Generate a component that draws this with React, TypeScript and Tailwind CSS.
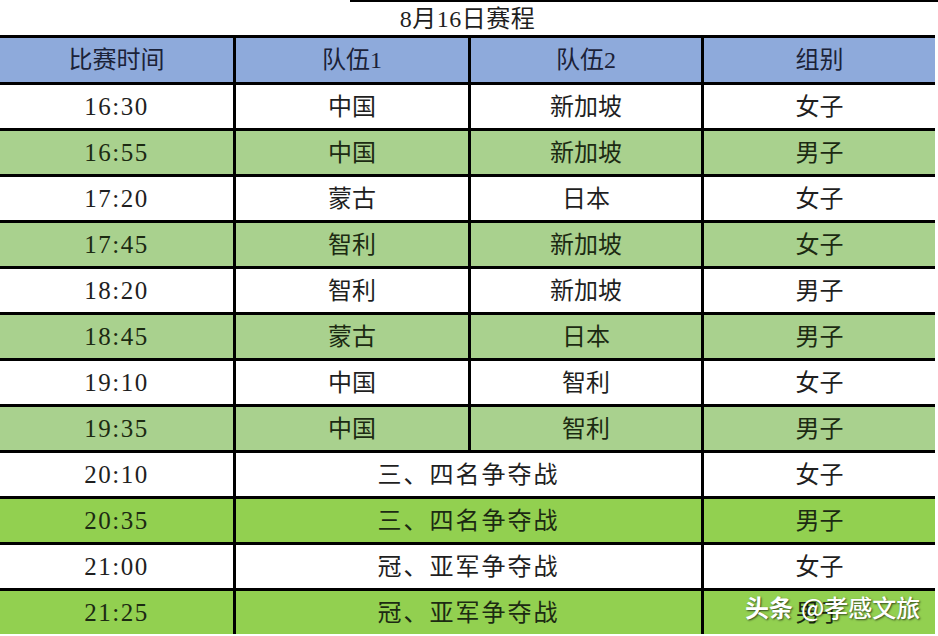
import React from "react"

type Row = {
  time: string
  team1: string
  team2?: string
  group: string
  tone: "white" | "light" | "bright"
}

const rows: Row[] = [
  { time: "16:30", team1: "中国", team2: "新加坡", group: "女子", tone: "white" },
  { time: "16:55", team1: "中国", team2: "新加坡", group: "男子", tone: "light" },
  { time: "17:20", team1: "蒙古", team2: "日本", group: "女子", tone: "white" },
  { time: "17:45", team1: "智利", team2: "新加坡", group: "女子", tone: "light" },
  { time: "18:20", team1: "智利", team2: "新加坡", group: "男子", tone: "white" },
  { time: "18:45", team1: "蒙古", team2: "日本", group: "男子", tone: "light" },
  { time: "19:10", team1: "中国", team2: "智利", group: "女子", tone: "white" },
  { time: "19:35", team1: "中国", team2: "智利", group: "男子", tone: "light" },
  { time: "20:10", team1: "三、四名争夺战", group: "女子", tone: "white" },
  { time: "20:35", team1: "三、四名争夺战", group: "男子", tone: "bright" },
  { time: "21:00", team1: "冠、亚军争夺战", group: "女子", tone: "white" },
  { time: "21:25", team1: "冠、亚军争夺战", group: "男子", tone: "bright" },
]

const toneClass = {
  white: "bg-white text-[#1f1f1f]",
  light: "bg-[#a9d18e] text-[#1c2a12]",
  bright: "bg-[#92d050] text-[#1c2a12]",
}

const cell = "flex items-center justify-center h-[43px]"

export default function App() {
  return (
    <div
      className="relative w-[938px] h-[636px] overflow-hidden bg-white"
      style={{ fontFamily: '"Liberation Serif", "Noto Sans CJK SC", serif' }}
    >
      {/* partial top rule */}
      <div className="flex h-[2px]">
        <div className="w-[350px] bg-white" />
        <div className="flex-1 bg-black" />
      </div>

      <div className="grid w-[935px] grid-cols-[233px_232px_230px_231px] gap-[3px] bg-black text-[24px]">
        <div className="col-span-4 flex h-[33px] items-center justify-center bg-white text-[#1f1f1f] tracking-[0.5px]">
          8月16日赛程
        </div>

        {["比赛时间", "队伍1", "队伍2", "组别"].map((h) => (
          <div key={h} className="flex h-[44px] items-center justify-center bg-[#8eaadb] text-[#1b2238]">
            {h}
          </div>
        ))}

        {rows.map((r) => (
          <React.Fragment key={r.time}>
            <div className={`${cell} ${toneClass[r.tone]} text-[25px] tracking-[1.5px]`}>{r.time}</div>
            {r.team2 ? (
              <>
                <div className={`${cell} ${toneClass[r.tone]}`}>{r.team1}</div>
                <div className={`${cell} ${toneClass[r.tone]}`}>{r.team2}</div>
              </>
            ) : (
              <div className={`${cell} col-span-2 ${toneClass[r.tone]} tracking-[2px]`}>{r.team1}</div>
            )}
            <div className={`${cell} ${toneClass[r.tone]}`}>{r.group}</div>
          </React.Fragment>
        ))}
      </div>

      {/* watermark */}
      <div
        className="absolute left-[745px] top-[589px] flex items-center gap-[8px] text-[24px] font-bold text-white"
        style={{
          fontFamily: '"Noto Sans CJK SC", "Noto Sans", sans-serif',
          textShadow: "1px 1px 2px rgba(0,0,0,0.65)",
        }}
      >
        <span>头条</span>
        <span className="font-medium">@孝感文旅</span>
      </div>
    </div>
  )
}
